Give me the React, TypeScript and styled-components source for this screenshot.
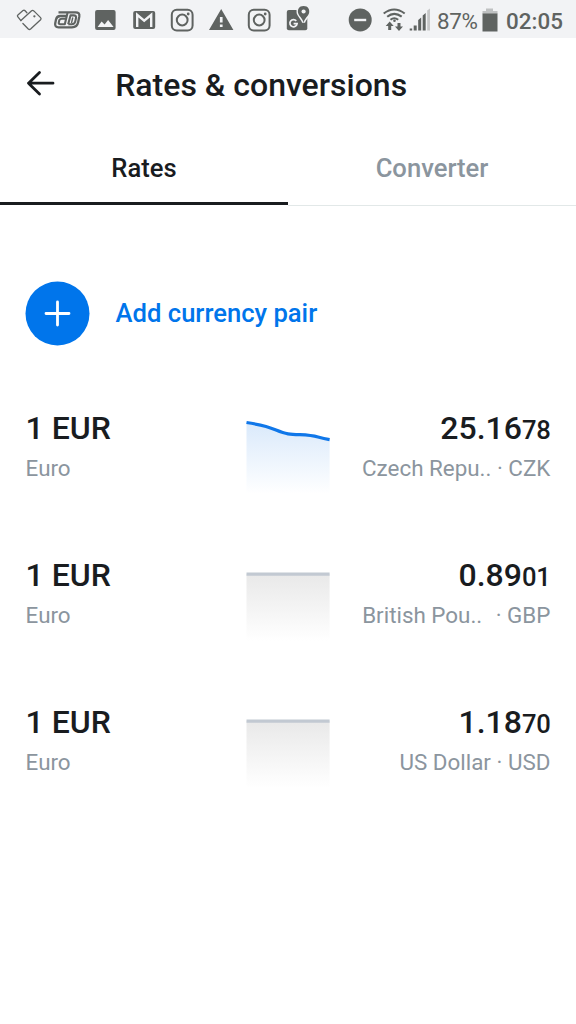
import React from "react";
import styled, { createGlobalStyle } from "styled-components";

const Global = createGlobalStyle`
  * { box-sizing: border-box; }
  body { margin: 0; background: #fff; font-family: Roboto, sans-serif; color: #191c1f; -webkit-font-smoothing: antialiased; }
  svg { display: block; flex: none; }
`;

const Screen = styled.div`
  width: 576px;
  height: 1024px;
  overflow: hidden;
  background: #fff;
`;

const StatusBar = styled.div`
  display: flex;
  align-items: center;
  height: 38.4px;
  padding-left: 9.6px;
  background: #f2f3f5;
  color: #5f6361;
`;

const Battery = styled.span`
  width: 45px;
  margin-left: 7.4px;
  font-size: 22.4px;
  line-height: 38px;
  padding-top: 3px;
  letter-spacing: -0.4px;
`;

const Clock = styled.span`
  margin-left: 8px;
  font-size: 22.4px;
  font-weight: 500;
  line-height: 38px;
  padding-top: 3px;
`;

const AppBar = styled.header`
  display: flex;
  align-items: center;
  height: 89.6px;
  padding-left: 25px;
`;

const Title = styled.h1`
  margin: 3px 0 0 59.2px;
  font-size: 32px;
  font-weight: 500;
  line-height: 38px;
`;

const Tabs = styled.nav`
  display: flex;
  height: 78px;
`;

const Tab = styled.button<{ $active?: boolean }>`
  flex: 1;
  height: ${(p) => (p.$active ? "77px" : "78px")};
  padding: ${(p) => (p.$active ? "6.4px" : "3px")} 0 0;
  border: 0;
  border-bottom: ${(p) => (p.$active ? "3px solid #191c1f" : "1px solid #e2e8e8")};
  background: none;
  font: 500 25.6px/30px Roboto, sans-serif;
  color: ${(p) => (p.$active ? "#191c1f" : "#8b959e")};
`;

const AddPair = styled.button`
  display: flex;
  align-items: center;
  width: 100%;
  height: 65px;
  margin-top: 75.4px;
  padding: 0 25px;
  border: 0;
  background: none;
  gap: 25.6px;
  font: 500 25.6px/30px Roboto, sans-serif;
  color: #0075eb;
`;

const AddLabel = styled.span`
  padding-bottom: 1px;
`;

const RateList = styled.ul`
  margin: 31.6px 0 0;
  padding: 0;
  list-style: none;
`;

const RateRow = styled.li`
  display: grid;
  grid-template-columns: 1fr 84px 1fr;
  height: 147.2px;
  padding: 0 25.6px;
`;

const Side = styled.div<{ $end?: boolean }>`
  padding-top: 31px;
  text-align: ${(p) => (p.$end ? "right" : "left")};
  white-space: nowrap;
`;

const Amount = styled.div`
  height: 38px;
  font-size: 32px;
  font-weight: 500;
  line-height: 38px;
`;

const Minor = styled.span`
  font-size: 25.6px;
  letter-spacing: -0.3px;
`;

const Caption = styled.div`
  margin-top: 8px;
  font-size: 22.4px;
  line-height: 27px;
  color: #8b959e;
  white-space: pre;
`;

const Chart = styled.svg`
  margin-top: 39px;
`;

const Slot = ({ x, w = 38.4, children }: { x: number; w?: number; children: React.ReactNode }) => (
  <svg width={w} height="38.4" viewBox={`${x} 0 ${w} 38.4`} fill="currentColor">
    {children}
  </svg>
);

const Instagram = ({ x }: { x: number }) => (
  <Slot x={x}>
    <g transform={`translate(${x + 19.2} 20)`} fill="none" stroke="currentColor" strokeWidth="2">
      <rect x="-10.4" y="-10.2" width="20.8" height="20.6" rx="5" />
      <circle cx="0" cy="0" r="5.4" />
      <circle cx="6" cy="-6" r="1.4" fill="currentColor" stroke="none" />
    </g>
  </Slot>
);

const rates = [
  { value: "25.16", minor: "78", label: "Czech Repu.. · CZK", trend: true },
  { value: "0.89", minor: "01", label: "British Pou..  \u200a· GBP", trend: false },
  { value: "1.18", minor: "70", label: "US Dollar · USD", trend: false },
];

const Trend = ({ id, moving }: { id: string; moving: boolean }) => {
  const line = moving
    ? "M0.500 5.500C7 6.500 14 7.800 20 9.500C29 12 34 15.500 42 16.800C52 18.200 62 17.200 72 20Q78 21.700 83.600 22.700"
    : "M0.500 10.200H83.600";
  const top = moving ? "#dbeafb" : "#e8e8e8";
  return (
    <Chart width="84" height="78" viewBox="0 0 84 78">
      <defs>
        <linearGradient id={id} x1="0" y1="8" x2="0" y2="77" gradientUnits="userSpaceOnUse">
          <stop stopColor={top} />
          <stop offset="1" stopColor={top} stopOpacity="0" />
        </linearGradient>
      </defs>
      <path d={`${line}V77H0.500Z`} fill={`url(#${id})`} />
      <path d={line} fill="none" stroke={moving ? "#1077e9" : "#c2c9d2"} strokeWidth="3.200" />
    </Chart>
  );
};

export default function App() {
  return (
    <Screen>
      <Global />
      <StatusBar>
        <Slot x={9.6}>
          <g fill="none" stroke="currentColor" strokeWidth="1.3" strokeLinejoin="round" strokeLinecap="round">
            <path d="M20.500 20.600L17.300 16.600Q16.600 15.700 17.500 14.900L22.600 10.600Q23.700 9.800 24.700 10.800L26.500 12.800" />
            <path d="M20.500 20.600L31.200 10.800Q32.300 9.900 33.400 10.900L40.200 17.600Q41.200 18.700 40.200 19.700L30.200 29Q29 30 27.900 29L22.500 23.500" />
            <circle cx="34" cy="16.300" r="0.500" />
          </g>
        </Slot>
        <Slot x={48}>
          <g fill="none" stroke="currentColor" strokeLinejoin="round">
            <path d="M58.500 12.300H75.500Q80 12.300 79.300 16.500L78.200 22Q77.200 27.300 72 27.300H58.500Q54.600 27.300 55.200 23.500L56 19.500Q56.800 16 60.500 16H66.500" strokeWidth="2.300" />
            <path d="M66.500 18.700H62Q59.700 18.700 59.200 20.600L58.800 22.600Q58.500 24.200 60.300 24.200H64.800L67.500 13M68.200 24.200H71.700Q74.700 24.200 75.300 21.400L76 18Q76.500 15.400 73.700 15.400H70.500L68.200 24.200" strokeWidth="2.100" />
            <path d="M72.800 17.500L71.500 23" strokeWidth="1.400" />
          </g>
        </Slot>
        <Slot x={86.4}>
          <path fillRule="evenodd" d="M97.500 10H114Q116 10 116 12V28Q116 30 114 30H97.500Q95.500 30 95.500 28V12Q95.500 10 97.500 10ZM98 27H114L108.500 20L105 24.500L102 21.500Z" />
        </Slot>
        <Slot x={124.8}>
          <rect x="133" y="11" width="22" height="18" rx="2" />
          <path d="M137 27V14.800L144 20.600L151 14.800V27" fill="none" stroke="#f2f3f5" strokeWidth="2.400" />
        </Slot>
        <Instagram x={163.2} />
        <Slot x={201.6}>
          <path fillRule="evenodd" d="M220.800 9L233 30H208.600ZM219.500 17V22.500H222.200V17ZM219.500 24.500V27H222.200V24.500Z" />
        </Slot>
        <Instagram x={240} />
        <Slot x={278.4}>
          <rect x="287.200" y="10" width="20.500" height="20.300" rx="2" />
          <path d="M304 6C299.300 6 297.800 9.500 298.500 13C299.200 16 303 18.500 304 22.500C305 18.500 308.800 16 309.500 13C310.200 9.500 308.700 6 304 6Z" stroke="#f2f3f5" strokeWidth="3" paintOrder="stroke" />
          <circle cx="304" cy="11.500" r="2.100" fill="#f2f3f5" />
          <path d="M296.700 20.900A3.600 3.600 0 1 0 297.500 23.700H294" fill="none" stroke="#f2f3f5" strokeWidth="1.700" />
        </Slot>
        <Slot x={316.8} w={113}>
          <circle cx="360" cy="20" r="11.500" />
          <rect x="354" y="18.800" width="12" height="2.400" fill="#f2f3f5" />
          <g fill="none" stroke="currentColor" strokeWidth="2.100">
            <path d="M383.500 13.500Q394 5.500 404.500 13.500M387 16.700Q394 11 401.500 16.700M390.300 19.800Q394 16.700 398 19.800" />
          </g>
          <circle cx="394.300" cy="20.800" r="1.300" />
          <path d="M389.500 21.500L393.500 26H391V30H388V26H385.500ZM397.300 23H400.300V26.500H402.800L398.800 31L394.800 26.500H397.300Z" />
          <path d="M409.500 28.500H412V30.500H409.500ZM413.500 25.500H416.500V30.500H413.500ZM418 20L421 17.500V30.500H418ZM422.500 15.500L425.500 13V30.500H422.500Z" />
          <path d="M427 10.500L429.800 8.500V30.500H427Z" opacity=".3" />
        </Slot>
        <Battery>87%</Battery>
        <svg width="16" height="38" viewBox="0 0 16 38">
          <path d="M4 8.500H11V11H15.500V14H0.500V11H4Z" fill="#bfc1c2" />
          <path d="M0.500 13.500H15.500V31.500H0.500Z" fill="#5f6361" />
        </svg>
        <Clock>02:05</Clock>
      </StatusBar>
      <AppBar>
        <svg width="31" height="28" viewBox="0 0 31 28" fill="none" stroke="#191c1f" strokeWidth="2.800" strokeLinecap="round" strokeLinejoin="round">
          <path d="M28 14.200H3.500M14.500 3.500L3.500 14.200L14.500 25" />
        </svg>
        <Title>Rates &amp; conversions</Title>
      </AppBar>
      <Tabs>
        <Tab $active>Rates</Tab>
        <Tab>Converter</Tab>
      </Tabs>
      <AddPair>
        <svg width="65" height="65" viewBox="0 0 65 65">
          <circle cx="32.500" cy="32.500" r="32" fill="#0075eb" />
          <path d="M32.500 21V44M21 32.500H44" stroke="#fff" strokeWidth="2.800" strokeLinecap="round" />
        </svg>
        <AddLabel>Add currency pair</AddLabel>
      </AddPair>
      <RateList>
        {rates.map((r) => (
          <RateRow key={r.label}>
            <Side>
              <Amount>1 EUR</Amount>
              <Caption>Euro</Caption>
            </Side>
            <Trend id={`fill-${r.minor}`} moving={r.trend} />
            <Side $end>
              <Amount>
                {r.value}
                <Minor>{r.minor}</Minor>
              </Amount>
              <Caption>{r.label}</Caption>
            </Side>
          </RateRow>
        ))}
      </RateList>
    </Screen>
  );
}
